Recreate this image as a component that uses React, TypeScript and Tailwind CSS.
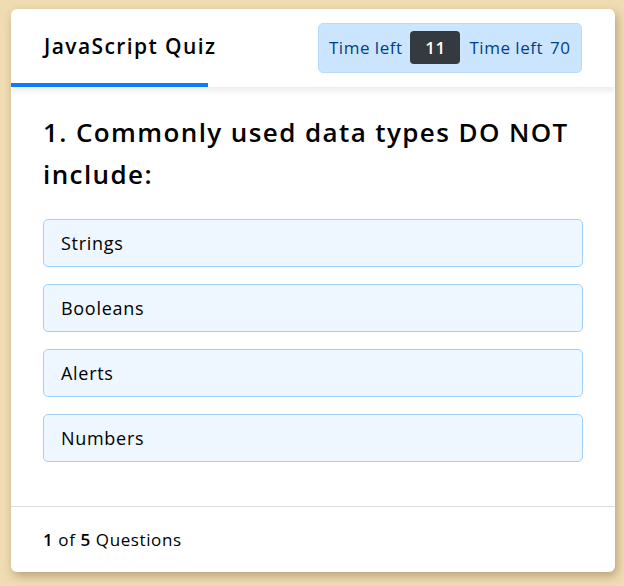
const options = ["Strings", "Booleans", "Alerts", "Numbers"];

export default function App() {
  return (
    <div
      className="min-h-[586px] w-[624px] bg-[#efdcb3] pt-[9px] pl-[11px]"
      style={{ fontFamily: '"Open Sans", "Noto Sans", sans-serif' }}
    >
      <div className="w-[604px] h-[563px] bg-white rounded-[6px] shadow-[2px_4px_10px_rgba(120,90,40,0.45)] flex flex-col overflow-hidden">
        {/* header */}
        <div className="relative h-[78px] flex items-center justify-between pl-[33px] pr-[33px] shadow-[0_4px_6px_rgba(0,0,0,0.08)] z-10">
          <h1 className="text-[21px] font-semibold text-black tracking-[1.4px] -mt-[2px]">JavaScript Quiz</h1>
          <div className="flex items-center shrink-0 whitespace-nowrap h-[50px] w-[264px] bg-[#cce5ff] border border-[#b8daff] rounded-[5px] px-[10px] pb-[1px] text-[17px] text-[#004085] tracking-[0.5px]">
            <span>Time left</span>
            <span className="ml-[8px] mr-[9px] w-[50px] h-[33px] shrink-0 rounded-[4px] bg-[#343a40] text-white flex items-center justify-center font-semibold">
              11
            </span>
            <span>Time left</span>
            <span className="ml-[7px]">70</span>
          </div>
          <div className="absolute left-0 bottom-0 h-[4px] w-[197px] bg-[#0a7cff]" />
        </div>

        {/* question */}
        <div className="flex-1 px-[32px] pt-[24px]">
          <h2 className="text-[26px] font-semibold leading-[42px] text-black tracking-[1.4px]">
            1. Commonly used data types DO NOT include:
          </h2>
          <div className="mt-[24px] flex flex-col gap-[17px]">
            {options.map((o) => (
              <div
                key={o}
                className="h-[48px] flex items-center px-[17px] bg-[#eef6ff] border border-[#a0d0fc] rounded-[5px] text-[18px] text-black tracking-[0.7px]"
              >
                {o}
              </div>
            ))}
          </div>
        </div>

        {/* footer */}
        <div className="h-[66px] border-t border-[#dcdcdc] flex items-center pl-[32px] text-[17px] text-black tracking-[0.6px]">
          <span className="font-semibold">1</span>
          <span className="mx-[5px]">of</span>
          <span className="font-semibold">5</span>
          <span className="ml-[5px]">Questions</span>
        </div>
      </div>
    </div>
  );
}
